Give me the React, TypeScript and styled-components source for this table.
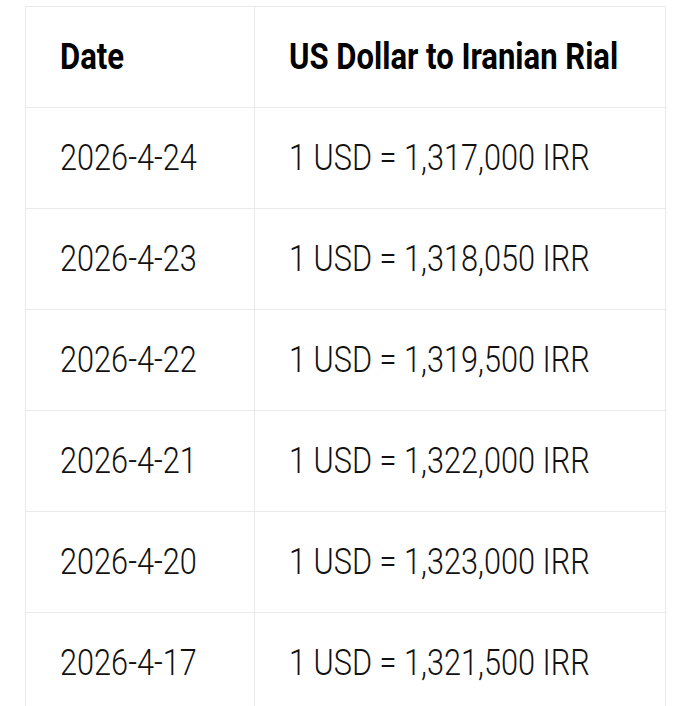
import styled, { createGlobalStyle } from 'styled-components'

const GlobalStyle = createGlobalStyle`
  html, body {
    margin: 0;
    padding: 0;
    background: #fff;
    font-family: Roboto, 'Liberation Sans', sans-serif;
  }
`

const RATES = [
  { date: '2026-4-24', rate: '1,317,000' },
  { date: '2026-4-23', rate: '1,318,050' },
  { date: '2026-4-22', rate: '1,319,500' },
  { date: '2026-4-21', rate: '1,322,000' },
  { date: '2026-4-20', rate: '1,323,000' },
  { date: '2026-4-17', rate: '1,321,500' },
]

export default function App() {
  return (
    <Page>
      <GlobalStyle />
      <Table>
        <colgroup>
          <col style={{ width: 229 }} />
          <col />
        </colgroup>
        <thead>
          <tr>
            <Cell as="th" $head>
              <Cond $scale={0.862}>Date</Cond>
            </Cell>
            <Cell as="th" $head>
              <Cond $scale={0.862}>US Dollar to Iranian Rial</Cond>
            </Cell>
          </tr>
        </thead>
        <tbody>
          {RATES.map(r => (
            <tr key={r.date}>
              <Cell>
                <Cond $scale={0.853}>{r.date}</Cond>
              </Cell>
              <Cell>
                <Cond $scale={0.853}>1 USD = {r.rate} IRR</Cond>
              </Cell>
            </tr>
          ))}
        </tbody>
      </Table>
    </Page>
  )
}

const Page = styled.div`
  padding: 6px 0 0 25px;
  height: 706px;
  box-sizing: border-box;
  overflow: hidden;
`

const Table = styled.table`
  width: 641px;
  border-collapse: collapse;
  table-layout: fixed;
  border: 1px solid #e9e9e9;
`

const Cell = styled.td<{ $head?: boolean }>`
  height: 100px;
  padding: 0 0 0 34px;
  border: 1px solid #e9e9e9;
  text-align: left;
  vertical-align: middle;
  font-size: 36px;
  line-height: 1;
  font-weight: ${p => (p.$head ? 700 : 300)};
  color: ${p => (p.$head ? '#000' : '#111')};
  white-space: nowrap;
  overflow: hidden;
`

// Roboto Condensed is not installed, so regular Roboto is squeezed horizontally
const Cond = styled.span<{ $scale: number }>`
  display: inline-block;
  transform: scaleX(${p => p.$scale});
  transform-origin: left center;
`
